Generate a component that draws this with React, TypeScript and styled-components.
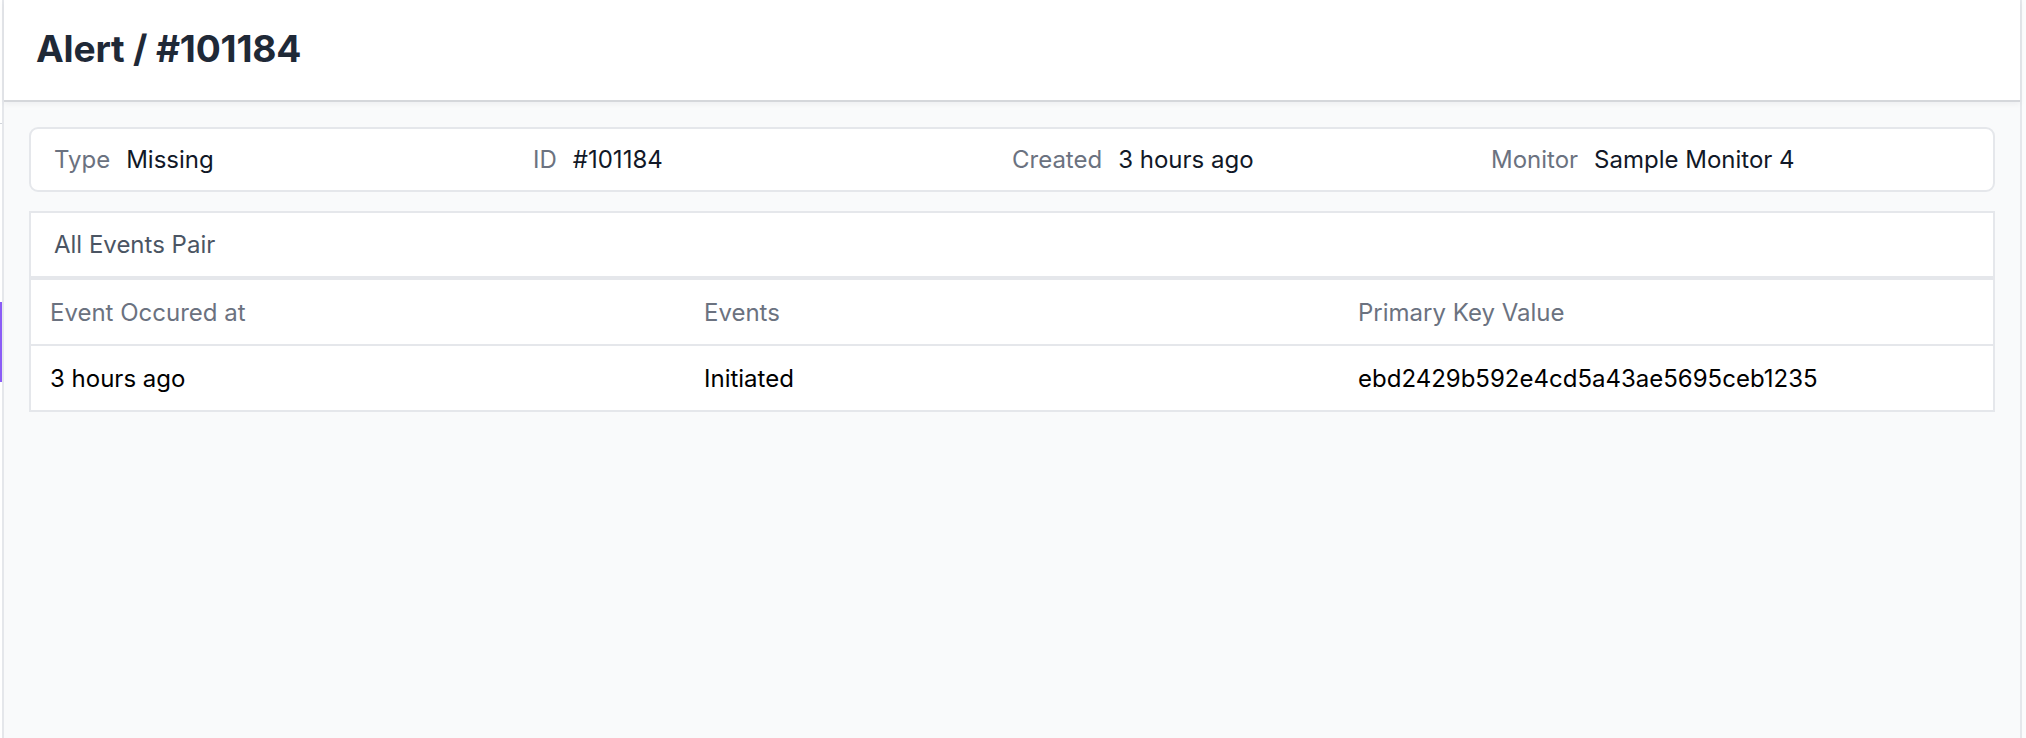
import React from "react";
import styled, { createGlobalStyle } from "styled-components";

const Global = createGlobalStyle`
  html, body { margin: 0; padding: 0; background: #ffffff; }
  body { font-family: Inter, "Noto Sans", "Liberation Sans", sans-serif; -webkit-font-smoothing: antialiased; }
  * { box-sizing: border-box; }
`;

const Shell = styled.div`
  display: flex;
  height: 738px;
  width: 2026px;
  overflow: hidden;
`;

const SideStrip = styled.div`
  width: 4px;
  flex: none;
  background: #ffffff;
  border-right: 2px solid #e5e7eb;
  display: flex;
  flex-direction: column;
`;

const SideTick = styled.div`
  margin-top: 123px;
  height: 1px;
  background: #d1d5db;
`;

const SideActive = styled.div`
  margin-top: 178px;
  height: 80px;
  background: #8b5cf6;
`;

const Main = styled.main`
  flex: 1;
  display: flex;
  flex-direction: column;
  background: #f9fafb;
  border-right: 2px solid #e5e7eb;
`;

const RightGutter = styled.div`
  width: 4px;
  flex: none;
  background: #fbfbfc;
`;

const Header = styled.header`
  height: 102px;
  flex: none;
  background: #ffffff;
  border-bottom: 2px solid #d5d7db;
  box-shadow: 0 2px 6px rgba(17, 24, 39, 0.05);
  display: flex;
  align-items: center;
  padding: 0 0 4px 32px;
  position: relative;
  z-index: 1;
`;

const Title = styled.h1`
  margin: 0;
  font-size: 37.2px;
  font-weight: 700;
  color: #1f2937;
  letter-spacing: -0.2px;
`;

const Content = styled.div`
  display: flex;
  flex-direction: column;
  gap: 19px;
  padding: 25px 25px;
`;

const InfoCard = styled.section`
  height: 65px;
  background: #ffffff;
  border: 2px solid #e5e7eb;
  border-radius: 9px;
  display: grid;
  grid-template-columns: repeat(4, 1fr);
  align-items: center;
  padding: 0 23px;
`;

const InfoItem = styled.div`
  display: flex;
  align-items: baseline;
  gap: 16px;
  font-size: 24px;
`;

const Label = styled.span`
  color: #6b7280;
`;

const Value = styled.span`
  color: #111827;
`;

const EventsCard = styled.section`
  background: #ffffff;
  border: 2px solid #e5e7eb;
`;

const EventsTitle = styled.div`
  height: 67px;
  display: flex;
  align-items: center;
  padding-left: 23px;
  font-size: 24px;
  color: #4b5563;
  border-bottom: 4px solid #e5e7eb;
`;

const Row = styled.div<{ $head?: boolean; $last?: boolean }>`
  display: grid;
  grid-template-columns: repeat(3, 1fr);
  align-items: center;
  height: ${(p) => (p.$head ? 66 : 64)}px;
  border-bottom: ${(p) => (p.$last ? "none" : "2px solid #e5e7eb")};
  font-size: 24px;
  color: ${(p) => (p.$head ? "#6b7280" : "#000000")};
`;

const Cell = styled.div`
  padding-left: 19px;
`;

const info = [
  { label: "Type", value: "Missing" },
  { label: "ID", value: "#101184" },
  { label: "Created", value: "3 hours ago" },
  { label: "Monitor", value: "Sample Monitor 4" },
];

const columns = ["Event Occured at", "Events", "Primary Key Value"];
const rows = [["3 hours ago", "Initiated", "ebd2429b592e4cd5a43ae5695ceb1235"]];

export default function App() {
  return (
    <>
      <Global />
      <Shell>
        <SideStrip>
          <SideTick />
          <SideActive />
        </SideStrip>
        <Main>
          <Header>
            <Title>Alert / #101184</Title>
          </Header>
          <Content>
            <InfoCard>
              {info.map((i) => (
                <InfoItem key={i.label}>
                  <Label>{i.label}</Label>
                  <Value>{i.value}</Value>
                </InfoItem>
              ))}
            </InfoCard>
            <EventsCard>
              <EventsTitle>All Events Pair</EventsTitle>
              <Row $head>
                {columns.map((c) => (
                  <Cell key={c}>{c}</Cell>
                ))}
              </Row>
              {rows.map((r, idx) => (
                <Row key={idx} $last={idx === rows.length - 1}>
                  {r.map((c, j) => (
                    <Cell key={j}>{c}</Cell>
                  ))}
                </Row>
              ))}
            </EventsCard>
          </Content>
        </Main>
        <RightGutter />
      </Shell>
    </>
  );
}
